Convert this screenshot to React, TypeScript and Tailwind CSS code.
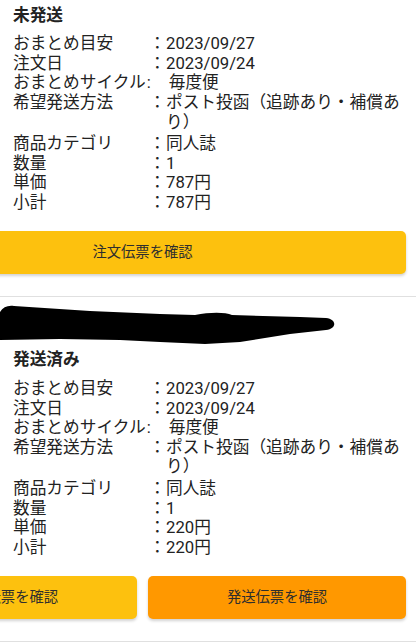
import React from "react";

type Row = { label: string; value: string; compact?: boolean; wrap?: boolean };

const rows1: Row[] = [
  { label: "おまとめ目安", value: "2023/09/27" },
  { label: "注文日", value: "2023/09/24" },
  { label: "おまとめサイクル", value: "毎度便", compact: true },
  { label: "希望発送方法", value: "ポスト投函（追跡あり・補償あり）", wrap: true },
  { label: "商品カテゴリ", value: "同人誌" },
  { label: "数量", value: "1" },
  { label: "単価", value: "787円" },
  { label: "小計", value: "787円" },
];

const rows2: Row[] = rows1.map((r) =>
  r.label === "単価" || r.label === "小計" ? { ...r, value: "220円" } : r
);

function Rows({ rows }: { rows: Row[] }) {
  return (
    <div className="mt-[8.7px] flex flex-col">
      {rows.map((r) =>
        r.compact ? (
          <div key={r.label} className="flex leading-[19.6px]">
            <span className="whitespace-nowrap">{r.label}</span>
            <span className="whitespace-nowrap pl-[1px]">:</span>
            <span className="flex-1 pl-[18px]">{r.value}</span>
          </div>
        ) : (
          <div
            key={r.label}
            className={`grid grid-cols-[136px_17px_1fr] leading-[19.6px] ${r.wrap ? "mb-[2px]" : ""}`}
          >
            <span className="whitespace-nowrap">{r.label}</span>
            <span className="whitespace-nowrap">：</span>
            <span>{r.value}</span>
          </div>
        )
      )}
    </div>
  );
}

function Btn({ label, orange }: { label: string; orange?: boolean }) {
  return (
    <button
      className={`flex-1 h-[43px] rounded-[5px] text-[14.3px] text-[#2e2e2e] shadow-[0_2px_3px_rgba(0,0,0,0.18)] ${
        orange ? "bg-[#ff9800]" : "bg-[#fdc10e]"
      }`}
    >
      {label}
    </button>
  );
}

function Scribble() {
  return (
    <svg width="340" height="47" viewBox="0 0 340 47" className="block">
      <path
        d="M0,12 C3,7 8,5 14,6 L90,11 L160,14 L195,15 C210,12 225,12 232,15 L300,17 L326,18 C337,19 337,29 326,30 L290,34 L240,42 L205,44 L160,42 L120,40 L60,39 L0,40 Z"
        fill="#000"
      />
    </svg>
  );
}

export default function App() {
  return (
    <div className="w-[416px] h-[642px] overflow-hidden bg-white text-[16.7px] text-[#222] font-[Roboto,'Noto_Sans_CJK_JP',sans-serif]">
      <div className="border-b border-[#e0e0e0] pb-[22px] pt-[5.5px]">
        <div className="pl-[13px] pr-[6px]">
          <h2 className="font-bold leading-[20px]">未発送</h2>
          <Rows rows={rows1} />
        </div>
        <div className="flex gap-[11px] -ml-[121px] mr-[10px] mt-[18.4px]">
          <Btn label="注文伝票を確認" />
        </div>
      </div>
      <div className="border-b border-[#e0e0e0] pb-[22px] pt-[3px]">
        <Scribble />
        <div className="pl-[13px] pr-[6px] mt-[3.5px]">
          <h2 className="font-bold leading-[20px]">発送済み</h2>
          <Rows rows={rows2} />
        </div>
        <div className="flex gap-[11px] -ml-[121px] mr-[10px] mt-[18.4px]">
          <Btn label="発送伝票を確認" />
          <Btn label="発送伝票を確認" orange />
        </div>
      </div>
    </div>
  );
}
